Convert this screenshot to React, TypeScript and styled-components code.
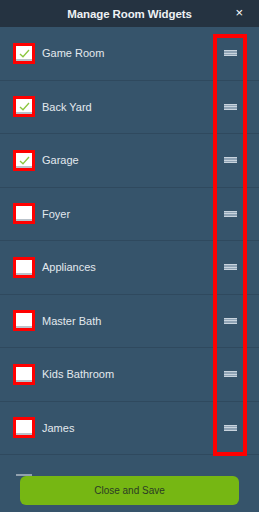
import React, { FC } from "react";
import styled, { createGlobalStyle } from "styled-components";

const GlobalStyle = createGlobalStyle`
  html, body {
    margin: 0;
    padding: 0;
    background: #36546b;
  }
  * {
    box-sizing: border-box;
  }
`;

const Screen = styled.div`
  position: relative;
  width: 259px;
  height: 512px;
  overflow: hidden;
  background: #36546b;
  font-family: "Liberation Sans", Arial, sans-serif;
`;

const Header = styled.div`
  height: 27px;
  background: #253341;
  display: flex;
  align-items: center;
  justify-content: center;
  position: relative;
`;

const Title = styled.div`
  color: #eef1f4;
  font-size: 11.5px;
  font-weight: bold;
  letter-spacing: -0.1px;
`;

const CloseX = styled.div`
  position: absolute;
  right: 16px;
  top: 5px;
  color: #ffffff;
  font-size: 13px;
  line-height: 16px;
`;

const List = styled.div`
  display: flex;
  flex-direction: column;
`;

const Row = styled.div`
  height: 53.5px;
  display: flex;
  align-items: center;
  padding-left: 13px;
  padding-right: 22px;
  border-bottom: 1px solid #2f495e;
`;

const Box = styled.div<{ $marked: boolean; $faded: boolean }>`
  width: 22px;
  height: 21px;
  border: 3px solid ${(p) => (p.$marked ? "#ff0000" : "transparent")};
  display: flex;
  flex-shrink: 0;
  opacity: ${(p) => (p.$faded ? 0.45 : 1)};
`;

const BoxInner = styled.div`
  flex: 1;
  background: #ffffff;
  box-shadow: inset 0 -2px 0 #b9c2ca;
  display: flex;
  align-items: center;
  justify-content: center;
`;

const Label = styled.div`
  margin-left: 7px;
  flex: 1;
  color: #e3e9ee;
  font-size: 11px;
`;

const Handle = styled.div`
  width: 13px;
  height: 6px;
  display: flex;
  flex-direction: column;
  justify-content: space-between;
  background: #8fa3b5;
`;

const HandleLine = styled.div`
  height: 1px;
  background: #c9d4de;
`;

const Highlight = styled.div`
  position: absolute;
  left: 213px;
  top: 34px;
  width: 34px;
  height: 422px;
  border: 4px solid #ff0000;
  pointer-events: none;
`;

const Footer = styled.div`
  position: absolute;
  left: 0;
  right: 0;
  top: 476px;
  bottom: 0;
  background: #36546b;
  padding: 0 20px;
`;

const SaveButton = styled.div`
  height: 29px;
  border-radius: 6px;
  background: #76b713;
  display: flex;
  align-items: center;
  justify-content: center;
  color: #2b3b25;
  font-size: 10px;
`;

const Check: FC = () => (
  <svg width="11" height="9" viewBox="0 0 11 9">
    <path d="M1 5 L4 7.8 L10 1" fill="none" stroke="#8cc63f" strokeWidth="1.3" />
  </svg>
);

const rooms = [
  { name: "Game Room", on: true, marked: true },
  { name: "Back Yard", on: true, marked: true },
  { name: "Garage", on: true, marked: true },
  { name: "Foyer", on: false, marked: true },
  { name: "Appliances", on: false, marked: true },
  { name: "Master Bath", on: false, marked: true },
  { name: "Kids Bathroom", on: false, marked: true },
  { name: "James", on: false, marked: true },
  { name: "Office", on: false, marked: false },
];

const App: FC = () => {
  return (
    <Screen>
      <GlobalStyle />
      <Header>
        <Title>Manage Room Widgets</Title>
        <CloseX>×</CloseX>
      </Header>
      <List>
        {rooms.map((room, idx) => (
          <Row key={idx}>
            <Box $marked={room.marked} $faded={!room.marked}>
              <BoxInner>{room.on && <Check />}</BoxInner>
            </Box>
            <Label>{room.name}</Label>
            <Handle>
              <HandleLine />
              <HandleLine />
              <HandleLine />
            </Handle>
          </Row>
        ))}
      </List>
      <Highlight />
      <Footer>
        <SaveButton>Close and Save</SaveButton>
      </Footer>
    </Screen>
  );
};

export default App;
